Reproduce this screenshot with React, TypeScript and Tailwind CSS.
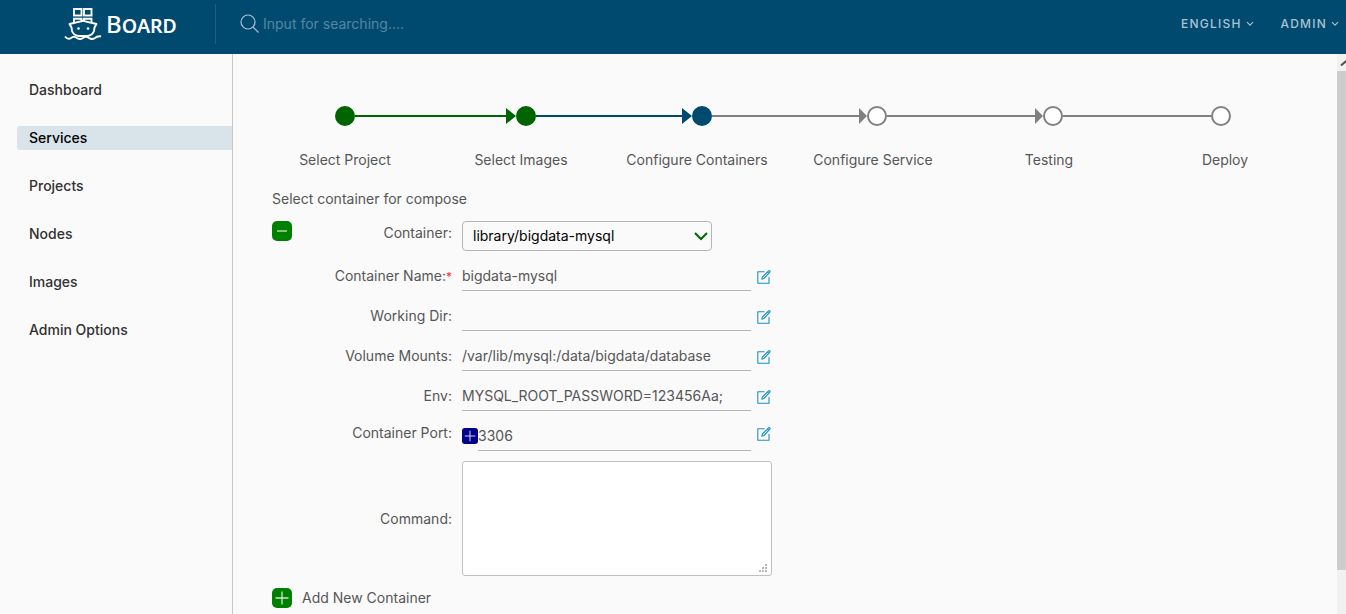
import { useState } from "react";
import type { ReactNode } from "react";

type StepState = "done" | "current" | "todo";

interface Step {
  label: string;
  state: StepState;
}

const steps: Step[] = [
  { label: "Select Project", state: "done" },
  { label: "Select Images", state: "done" },
  { label: "Configure Containers", state: "current" },
  { label: "Configure Service", state: "todo" },
  { label: "Testing", state: "todo" },
  { label: "Deploy", state: "todo" },
];

const navItems = ["Dashboard", "Services", "Projects", "Nodes", "Images", "Admin Options"];

const lineColor: Record<StepState, string> = {
  done: "bg-[#006400]",
  current: "bg-[#004a70]",
  todo: "bg-[#808080]",
};

const arrowColor: Record<StepState, string> = {
  done: "h-4 w-[10px] text-[#006400]",
  current: "h-4 w-[10px] text-[#004a70]",
  todo: "h-4 w-2 text-[#808080]",
};

const dotColor: Record<StepState, string> = {
  done: "border-[#006400] bg-[#006400]",
  current: "border-[#004a70] bg-[#004a70]",
  todo: "border-[#808080] bg-white",
};

function ShipLogo() {
  return (
    <svg viewBox="0 0 38 34" className="h-[34px] w-[38px]" fill="none" stroke="#fff" strokeWidth="1.9" aria-hidden="true">
      <rect x="10" y="2" width="7.5" height="6.500" />
      <rect x="20" y="2" width="7.5" height="6.500" />
      <path d="M10 15.5V11.800h7.500v2.700M20 14.500v-2.700h7.500v3.700" />
      <path d="M5.500 17 19 13.800 32.500 17 30.500 20.500 30 24C29 27 26.500 28.500 23.500 29H14.500C11.500 28.500 9 27 8 24L7.500 20.500Z" strokeLinejoin="round" />
      <path d="M1 29.500Q4 33 7 31Q10 28.500 13 31Q16 33 19 31Q22 28.500 25 31Q28 33 31 31Q34 28.500 37 29.500" />
      <circle cx="14.500" cy="21.500" r="1.300" fill="#fff" stroke="none" />
      <circle cx="24" cy="21.500" r="1.300" fill="#fff" stroke="none" />
    </svg>
  );
}

function Caret() {
  return (
    <svg viewBox="0 0 8 6" className="h-[6px] w-2" fill="none" stroke="currentColor" strokeWidth="1.1" aria-hidden="true">
      <path d="M1 1.200 4 4.200 7 1.200" />
    </svg>
  );
}

function EditIcon() {
  return (
    <svg viewBox="0 0 14 14" className="h-[14px] w-[14px]" fill="none" stroke="#1b8fcb" strokeWidth="1.1" strokeLinejoin="round" aria-hidden="true">
      <path d="M7.500 1.800H.8v11.400h11.200V7" />
      <path d="M4.800 9.200l.6-2.200L11.600.8q.6-.4 1.200.1.600.6.1 1.300L6.900 8.500z" />
      <path d="M10.400 2l1.400 1.400" />
    </svg>
  );
}

function SignIcon({ plus }: { plus: boolean }) {
  return (
    <svg viewBox="0 0 20 20" className="h-full w-full" stroke="#fff" strokeOpacity="0.8" strokeWidth="1.300" aria-hidden="true">
      {plus ? <path d="M3.500 10h13M10 3.500v13" /> : <path d="M5 10h10" />}
    </svg>
  );
}

function Stepper() {
  return (
    <ol className="flex">
      {steps.map((step, i) => {
        const last = i === steps.length - 1;
        return (
          <li key={step.label} className="flex min-w-0 flex-1 flex-col">
            <div className="flex h-5 items-center">
              <span className={`h-[2px] flex-1 ${i > 0 ? lineColor[step.state] : ""}`} />
              {i > 0 && !last && (
                <svg viewBox="0 0 10 16" preserveAspectRatio="none" className={arrowColor[step.state]} fill="currentColor" aria-hidden="true">
                  <path d="M0 0 10 8 0 16z" />
                </svg>
              )}
              <span className={`h-5 w-5 rounded-full border-2 ${dotColor[step.state]}`} />
              {last && <span className="w-2" />}
              <span className={`h-[2px] flex-1 ${last ? "" : lineColor[steps[i + 1].state]}`} />
            </div>
            <span className="mt-6 text-center whitespace-nowrap">{step.label}</span>
          </li>
        );
      })}
    </ol>
  );
}

interface FieldProps {
  id: string;
  label: string;
  required?: boolean;
  raised?: boolean;
  children: ReactNode;
}

function Field({ id, label, required, raised, children }: FieldProps) {
  return (
    <div className="flex h-10 items-center">
      <label htmlFor={id} className={`mr-[10px] w-[180px] text-right ${raised ? "pb-[6px]" : ""}`}>
        {label}:{required && <span className="text-[12px] leading-none text-red-500">*</span>}
      </label>
      <div className="flex w-[289px]">{children}</div>
      <button type="button" aria-label={`Edit ${label}`} className={`ml-[6px] ${raised ? "pb-1" : "pt-[2px]"}`}>
        <EditIcon />
      </button>
    </div>
  );
}

const inputClass = "h-[30px] min-w-0 flex-1 border-b border-[#b5b5b5] bg-transparent outline-none";

export default function App() {
  const [active, setActive] = useState("Services");

  return (
    <div className="flex h-screen flex-col overflow-hidden bg-[#fafafa] font-['Inter','Noto_Sans',sans-serif] text-[14px] leading-5 text-[#565656]">
      <header className="flex h-[54px] shrink-0 items-center bg-[#004a70] pb-[6px] text-[#a9c3d1]">
        <div className="flex h-10 w-[216px] items-center gap-1 border-r border-[#1f6083] pl-16 text-white">
          <ShipLogo />
          <span className="font-['Noto_Sans',sans-serif] text-[24px] leading-6 font-medium [font-variant:small-caps]">Board</span>
        </div>
        <label htmlFor="search" className="ml-6" aria-label="Search">
          <svg viewBox="0 0 20 20" className="h-5 w-5" fill="none" stroke="currentColor" strokeWidth="1.2" aria-hidden="true">
            <circle cx="8" cy="8" r="7" />
            <path d="m13 13 5.500 5.500" />
          </svg>
        </label>
        <input id="search" placeholder="Input for searching...." className="ml-[3px] min-w-0 flex-1 bg-transparent outline-none placeholder:text-[#5487a2]" />
        <button type="button" className="flex items-center gap-1 text-[12px] font-medium tracking-widest">
          ENGLISH <Caret />
        </button>
        <button type="button" className="mr-[7px] ml-[27px] flex items-center gap-1 text-[12px] font-medium tracking-widest">
          ADMIN <Caret />
        </button>
      </header>

      <div className="flex min-h-0 flex-1">
        <nav className="flex w-[233px] shrink-0 flex-col gap-6 border-r border-[#c8c8c8] pt-6 pl-[17px] font-medium text-[#313131]">
          {navItems.map((item) => (
            <a
              key={item}
              href="#"
              onClick={() => setActive(item)}
              className={`rounded-l-[3px] pl-3 leading-6 ${item === active ? "bg-[#d9e4ea] text-black" : ""}`}
            >
              {item}
            </a>
          ))}
        </nav>

        <main className="min-w-0 flex-1 overflow-hidden px-6 pt-[52px]">
          <Stepper />
          <form className="pl-[15px]">
            <p className="mt-[19px]">Select container for compose</p>
            <div className="mt-3 flex h-[30px]">
              <button type="button" aria-label="Remove container" className="h-5 w-5 rounded-[5px] bg-[#008000]">
                <SignIcon plus={false} />
              </button>
              <label htmlFor="container" className="mt-[2px] mr-[10px] w-40 text-right">
                Container:
              </label>
              <div className="relative w-[250px]">
                <select id="container" className="h-[30px] w-full appearance-none rounded-[4px] border border-[#b5b5b5] bg-transparent pl-[10px] text-black">
                  <option>library/bigdata-mysql</option>
                </select>
                <svg viewBox="0 0 14 9" className="pointer-events-none absolute top-[11px] right-1 h-[9px] w-[14px]" fill="none" stroke="#006400" strokeWidth="2" aria-hidden="true">
                  <path d="M1 1l6 6 6-6" />
                </svg>
              </div>
            </div>

            <div className="mt-[5px]">
              <Field id="name" label="Container Name" required>
                <input id="name" defaultValue="bigdata-mysql" className={inputClass} />
              </Field>
              <Field id="dir" label="Working Dir">
                <input id="dir" className={inputClass} />
              </Field>
              <Field id="mounts" label="Volume Mounts">
                <input id="mounts" defaultValue="/var/lib/mysql:/data/bigdata/database" className={inputClass} />
              </Field>
              <Field id="env" label="Env">
                <input id="env" defaultValue="MYSQL_ROOT_PASSWORD=123456Aa;" className={inputClass} />
              </Field>
              <Field id="port" label="Container Port" raised>
                <button type="button" aria-label="Add port" className="h-4 w-4 self-center rounded-[3px] bg-[#00008b]">
                  <SignIcon plus />
                </button>
                <input id="port" defaultValue="3306" className={inputClass} />
              </Field>
            </div>

            <div className="mt-[5px] flex items-center">
              <label htmlFor="command" className="mr-[10px] w-[180px] text-right">
                Command:
              </label>
              <div className="relative">
                <textarea id="command" className="block h-[115px] w-[310px] resize rounded-[3px] border border-[#c0c0c0] bg-white outline-none" />
                <svg viewBox="0 0 14 14" className="pointer-events-none absolute right-[2px] bottom-[2px] h-[14px] w-[14px] bg-white" fill="#b8b8b8" aria-hidden="true">
                  <path d="M9 4h2v2H9zM6 7h2v2H6zM9 7h2v2H9zM3 10h2v2H3zM6 10h2v2H6zM9 10h2v2H9z" />
                </svg>
              </div>
            </div>
            <button type="button" className="mt-3 flex items-center gap-[10px]">
              <span className="h-5 w-5 rounded-[5px] bg-[#008000]">
                <SignIcon plus />
              </span>
              Add New Container
            </button>
          </form>
        </main>

        <div className="flex w-[9px] shrink-0 flex-col overflow-hidden bg-[#f1f1f1]" aria-hidden="true">
          <svg viewBox="0 0 9 17" className="h-[17px] w-[9px] shrink-0" fill="none" stroke="#505050" strokeWidth="2">
            <path d="M4 11.500 8.500 7.500 13 11.500" />
          </svg>
          <div className="mb-11 flex-1 bg-[#cdcdcd]" />
        </div>
      </div>
    </div>
  );
}
